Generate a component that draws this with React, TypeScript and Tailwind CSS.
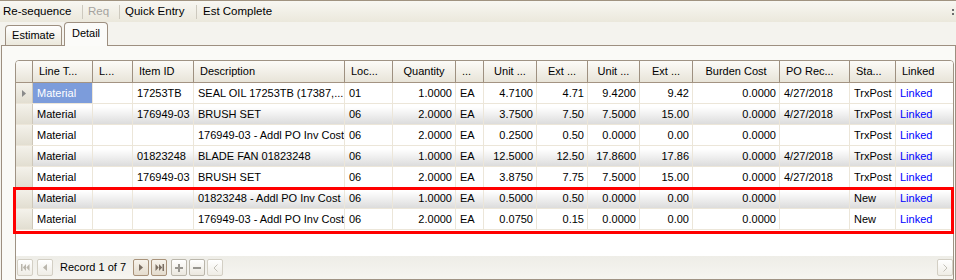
import React from "react";

type Col = {
  key: string;
  label: string;
  w: string;
  num?: boolean;
  last?: boolean;
};

const cols: Col[] = [
  { key: "line", label: "Line T...", w: "w-[60px]" },
  { key: "l", label: "L...", w: "w-[40px]" },
  { key: "item", label: "Item ID", w: "w-[61px]" },
  { key: "desc", label: "Description", w: "w-[151px]" },
  { key: "loc", label: "Loc...", w: "w-[48px]" },
  { key: "qty", label: "Quantity", w: "w-[63px]", num: true },
  { key: "uom", label: "...", w: "w-[28px]" },
  { key: "unit", label: "Unit ...", w: "w-[53px]", num: true },
  { key: "ext", label: "Ext ...", w: "w-[51px]", num: true },
  { key: "unit2", label: "Unit ...", w: "w-[52px]", num: true },
  { key: "ext2", label: "Ext ...", w: "w-[53px]", num: true },
  { key: "burden", label: "Burden Cost", w: "w-[87px]", num: true },
  { key: "po", label: "PO Rec...", w: "w-[70px]" },
  { key: "status", label: "Sta...", w: "w-[46px]" },
  { key: "linked", label: "Linked", w: "w-[57px]", last: true },
];

type Row = Record<string, string>;

const mk = (
  item: string,
  desc: string,
  loc: string,
  qty: string,
  unit: string,
  ext: string,
  unit2: string,
  ext2: string,
  po: string,
  status: string
): Row => ({
  line: "Material",
  l: "",
  item,
  desc,
  loc,
  qty,
  uom: "EA",
  unit,
  ext,
  unit2,
  ext2,
  burden: "0.0000",
  po,
  status,
  linked: "Linked",
});

const rows: Row[] = [
  mk("17253TB", "SEAL OIL 17253TB (17387,...", "01", "1.0000", "4.7100", "4.71", "9.4200", "9.42", "4/27/2018", "TrxPost"),
  mk("176949-03", "BRUSH SET", "06", "2.0000", "3.7500", "7.50", "7.5000", "15.00", "4/27/2018", "TrxPost"),
  mk("", "176949-03 - Addl PO Inv Cost", "06", "2.0000", "0.2500", "0.50", "0.0000", "0.00", "", "TrxPost"),
  mk("01823248", "BLADE FAN 01823248", "06", "1.0000", "12.5000", "12.50", "17.8600", "17.86", "4/27/2018", "TrxPost"),
  mk("176949-03", "BRUSH SET", "06", "2.0000", "3.8750", "7.75", "7.5000", "15.00", "4/27/2018", "TrxPost"),
  mk("", "01823248 - Addl PO Inv Cost", "06", "1.0000", "0.5000", "0.50", "0.0000", "0.00", "", "New"),
  mk("", "176949-03 - Addl PO Inv Cost", "06", "2.0000", "0.0750", "0.15", "0.0000", "0.00", "", "New"),
];

function NavBtn({ kind, children }: { kind: "off" | "on" | "edit"; children: React.ReactNode }) {
  const border =
    kind === "on" ? "border-[#a8927a] from-[#f7f3ec] to-[#e4dccd]" : kind === "edit" ? "border-[#bab6ab] from-white to-[#ebe8df]" : "border-[#d3cfc4] from-white to-[#efede6]";
  return (
    <div className={`flex h-[17px] w-[16px] shrink-0 items-center justify-center rounded-[2px] border bg-linear-to-b ${border}`}>
      {children}
    </div>
  );
}

export default function App() {
  return (
    <div className="relative h-[280px] w-[956px] overflow-hidden bg-[#f4f3ee] font-['Liberation_Sans',Arial,sans-serif] text-black">
      {/* toolbar */}
      <div className="flex h-[22px] items-center border-t border-[#a09380] bg-linear-to-b from-[#f8f7f2] to-[#ebe8dc] text-[11.5px]">
        <div className="w-[82px] shrink-0 pl-[3px]">Re-sequence</div>
        <div className="h-[14px] w-px shrink-0 bg-[#cdc9be]" />
        <div className="w-[36px] shrink-0 pl-[5px] text-[#a5a39e]">Req</div>
        <div className="h-[14px] w-px shrink-0 bg-[#cdc9be]" />
        <div className="w-[76px] shrink-0 pl-[5px]">Quick Entry</div>
        <div className="h-[14px] w-px shrink-0 bg-[#cdc9be]" />
        <div className="pl-[6px]">Est Complete</div>
        <div className="ml-auto mr-[2px] flex flex-col gap-[2px]">
          <div className="h-[2px] w-[2px] bg-[#6d6d6d]" />
          <div className="h-[2px] w-[2px] bg-[#6d6d6d]" />
        </div>
      </div>

      {/* tabs */}
      <div className="flex h-[23px] items-end pl-[5px] text-[11px]">
        <div className="flex h-[20px] w-[57px] items-center justify-center rounded-t-[4px] border border-b-0 border-[#9d8f80] bg-linear-to-b from-white to-[#ebe8dc]">
          Estimate
        </div>
        <div className="relative z-10 -mb-px ml-[2px] flex h-[24px] w-[44px] items-center justify-center rounded-t-[4px] border border-b-0 border-[#9d8f80] bg-[#fbfbf9] pb-[2px]">
          Detail
        </div>
      </div>

      {/* panel */}
      <div className="ml-[1px] h-[235px] w-[955px] border-x border-t border-[#9d8f80] bg-[#fafaf7] pl-[13px] pt-[14px]">
        <div className="flex h-[220px] w-[939px] flex-col overflow-hidden rounded-t-[4px] border border-[#9f9384] bg-white text-[11px] leading-none">
          {/* header */}
          <div className="flex h-[22px] shrink-0 border-b border-[#a39382] bg-linear-to-b from-[#fcfbf8] to-[#e8e4d8]">
            <div className="w-[17px] shrink-0 border-r border-[#9e9080]" />
            {cols.map((c) => (
              <div
                key={c.key}
                className={`flex shrink-0 items-center overflow-hidden whitespace-nowrap ${c.w} ${c.last ? "" : "border-r border-[#9e9080]"} ${c.num ? "justify-center" : "pl-[6px]"}`}
              >
                {c.label}
              </div>
            ))}
          </div>

          {/* rows */}
          {rows.map((r, i) => (
            <div
              key={i}
              className={`flex h-[21px] shrink-0 border-b border-[#ece6d9] ${i % 2 === 1 ? "bg-linear-to-b from-white from-15% via-[#f1f1f1] via-50% to-[#dcdcdc]" : "bg-white"}`}
            >
              <div className="flex w-[17px] shrink-0 items-center justify-center border-r border-[#cfc8b9] bg-linear-to-b from-[#f4f2eb] to-[#e2ded1]">
                {i === 0 && (
                  <svg width="4" height="7" viewBox="0 0 4 7">
                    <path d="M0 0 L4 3.5 L0 7Z" fill="#8a8a8a" />
                  </svg>
                )}
              </div>
              {cols.map((c) => {
                const sel = i === 0 && c.key === "line";
                return (
                  <div
                    key={c.key}
                    className={`flex shrink-0 items-center overflow-hidden whitespace-nowrap ${c.w} ${c.last ? "" : "border-r border-[#ece6d9]"} ${c.num ? "justify-end pr-[3px]" : "pl-[4px]"} ${sel ? "bg-[#7c9cdb] text-white" : ""} ${c.key === "linked" ? "text-[#0000ff]" : ""}`}
                  >
                    {r[c.key]}
                  </div>
                );
              })}
            </div>
          ))}

          <div className="flex-1" />

          {/* navigator + scroll */}
          <div className="flex h-[23px] shrink-0 items-start bg-linear-to-b from-[#eeede7] to-[#f6f5f1] pl-[1px] pt-[3px] text-[11px]">
            <NavBtn kind="off">
              <svg width="9" height="7" viewBox="0 0 9 7" fill="#bab6ac">
                <rect x="0" y="0" width="1.5" height="7" />
                <path d="M5 0 L1.8 3.5 L5 7Z M8.5 0 L5.3 3.5 L8.5 7Z" />
              </svg>
            </NavBtn>
            <div className="ml-[4px]">
              <NavBtn kind="off">
                <svg width="4" height="7" viewBox="0 0 4 7">
                  <path d="M4 0 L0 3.5 L4 7Z" fill="#bab6ac" />
                </svg>
              </NavBtn>
            </div>
            <div className="ml-[7px] flex h-[17px] w-[66px] shrink-0 items-center whitespace-nowrap">Record 1 of 7</div>
            <div className="ml-[7px]">
              <NavBtn kind="on">
                <svg width="4" height="7" viewBox="0 0 4 7">
                  <path d="M0 0 L4 3.5 L0 7Z" fill="#7a6e62" />
                </svg>
              </NavBtn>
            </div>
            <div className="ml-[2px]">
              <NavBtn kind="on">
                <svg width="9" height="7" viewBox="0 0 9 7" fill="#7a6e62">
                  <path d="M0.5 0 L3.7 3.5 L0.5 7Z M4 0 L7.2 3.5 L4 7Z" />
                  <rect x="7.5" y="0" width="1.5" height="7" />
                </svg>
              </NavBtn>
            </div>
            <div className="ml-[4px]">
              <NavBtn kind="edit">
                <svg width="8" height="8" viewBox="0 0 8 8" fill="#989690">
                  <rect x="3" y="0" width="2" height="8" />
                  <rect x="0" y="3" width="8" height="2" />
                </svg>
              </NavBtn>
            </div>
            <div className="ml-[2px]">
              <NavBtn kind="edit">
                <svg width="8" height="2" viewBox="0 0 8 2" fill="#989690">
                  <rect x="0" y="0" width="8" height="2" />
                </svg>
              </NavBtn>
            </div>
            <div className="ml-[2px]">
              <NavBtn kind="off">
                <svg width="5" height="8" viewBox="0 0 5 8">
                  <path d="M4.5 0.5 L1 4 L4.5 7.5" stroke="#c2bfb6" strokeWidth="1" fill="none" />
                </svg>
              </NavBtn>
            </div>
            <div className="h-[17px] flex-1" />
            <div className="mr-0">
              <NavBtn kind="off">
                <svg width="5" height="8" viewBox="0 0 5 8">
                  <path d="M0.5 0.5 L4 4 L0.5 7.5" stroke="#c2bfb6" strokeWidth="1" fill="none" />
                </svg>
              </NavBtn>
            </div>
          </div>
        </div>
      </div>

      {/* highlight box */}
      <div className="pointer-events-none absolute left-[13px] top-[187px] h-[47px] w-[941px] border-[3px] border-[#ff0000]" />
    </div>
  );
}
